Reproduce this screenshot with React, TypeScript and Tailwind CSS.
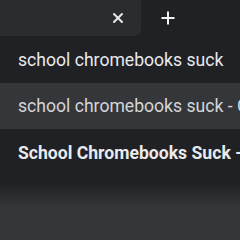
import React from 'react';

const App: React.FC = () => {
  return (
    <div className="w-[240px] h-[240px] overflow-hidden bg-[#202124] font-['Roboto',sans-serif] text-[#e8eaed] flex flex-col">
      <div className="flex h-[36px] shrink-0">
        <div className="w-[141px] bg-[#2b2c2f] rounded-br-[6px] flex items-center justify-end pr-[17px]">
          <svg width="12" height="12" viewBox="0 0 12 12">
            <path d="M2 2 L10 10 M10 2 L2 10" stroke="#e8eaed" strokeWidth="2" strokeLinecap="round" />
          </svg>
        </div>
        <div className="flex items-center pl-[19px]">
          <svg width="16" height="16" viewBox="0 0 16 16">
            <path d="M8 1.5 V14.5 M1.5 8 H14.5" stroke="#f1f3f4" strokeWidth="2" />
          </svg>
        </div>
      </div>
      <div className="h-[47px] shrink-0 flex items-center pl-[18px] pt-[2px] text-[17.6px] whitespace-nowrap">
        school chromebooks suck
      </div>
      <div className="h-[46px] shrink-0 bg-[#35363a] flex items-center pl-[18px] text-[17.6px] whitespace-nowrap text-[#d4d6d9]">
        school chromebooks suck - Google Search
      </div>
      <div className="h-[54px] shrink-0 flex items-center pl-[18px] pb-[5px] text-[17.6px] font-bold whitespace-nowrap">
        School Chromebooks Suck - Reddit
      </div>
      <div className="h-[24px] shrink-0 bg-gradient-to-b from-[#202124] to-[#353638]" />
      <div className="flex-1 bg-[#353638]" />
    </div>
  );
};

export default App;
